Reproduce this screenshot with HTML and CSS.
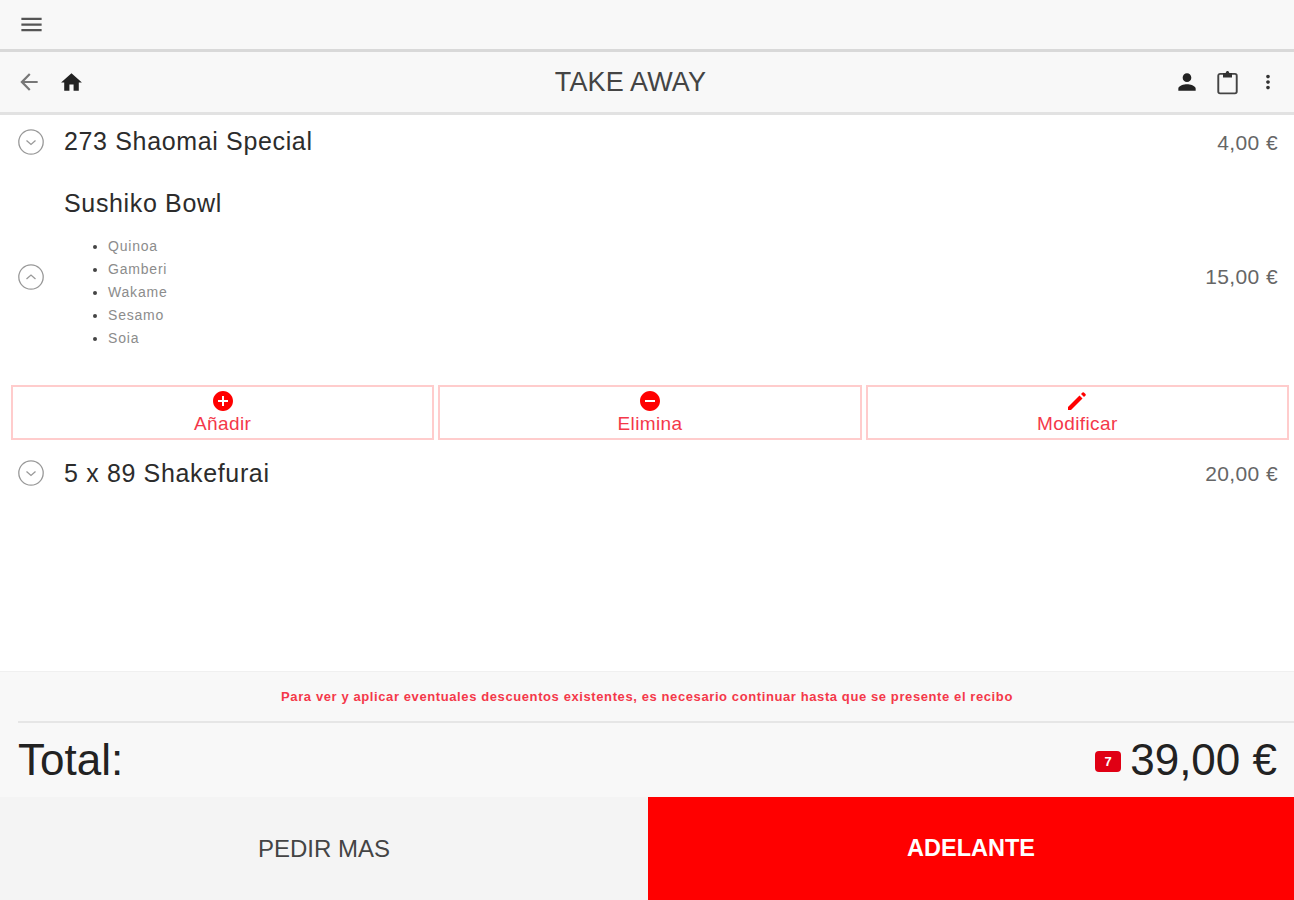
FILE: index.html
```html
<!DOCTYPE html>
<html lang="es">
<head>
    <meta charset="UTF-8">
    <meta name="viewport" content="width=device-width, initial-scale=1.0">
    <title>Take Away</title>
    <link rel="stylesheet" href="styles.css">
</head>
<body>
    <div class="app">
        <!-- Top bar -->
        <div class="top-bar">
            <svg class="menu-icon" viewBox="0 0 24 24"><path d="M3 18h18v-2H3v2zm0-5h18v-2H3v2zm0-7v2h18V6H3z"/></svg>
        </div>

        <!-- Title bar -->
        <div class="title-bar">
            <div class="title-left">
                <svg class="back-icon" viewBox="0 0 24 24"><path d="M20 11H7.830l5.590-5.590L12 4l-8 8 8 8 1.410-1.410L7.830 13H20v-2z"/></svg>
                <svg class="home-icon" viewBox="0 0 24 24"><path d="M10 20v-6h4v6h5v-8h3L12 3 2 12h3v8z"/></svg>
            </div>
            <div class="title">TAKE AWAY</div>
            <div class="title-right">
                <svg class="person-icon" viewBox="0 0 24 24"><path d="M12 12c2.210 0 4-1.790 4-4s-1.790-4-4-4-4 1.790-4 4 1.790 4 4 4zm0 2c-2.670 0-8 1.340-8 4v2h16v-2c0-2.660-5.330-4-8-4z"/></svg>
                <svg class="clip-icon" viewBox="0 0 24 24"><rect class="clip-body" x="3.800" y="4.300" width="16.400" height="17.400" rx="1.600"/><path d="M8 7.500V3.500h2.400C10.700 2.400 11.300 1.800 12 1.800s1.300.6 1.600 1.700H16v4z"/></svg>
                <svg class="more-icon" viewBox="0 0 24 24"><path d="M12 8c1.100 0 2-.9 2-2s-.9-2-2-2-2 .9-2 2 .9 2 2 2zm0 2c-1.100 0-2 .9-2 2s.9 2 2 2 2-.9 2-2-.9-2-2-2zm0 6c-1.100 0-2 .9-2 2s.9 2 2 2 2-.9 2-2-.9-2-2-2z"/></svg>
            </div>
        </div>

        <!-- Order lines -->
        <div class="order">
            <div class="line line-first">
                <svg class="toggle" viewBox="0 0 26 26"><circle cx="13" cy="13" r="12.200"/><path d="M8.500 11.500l4.500 4 4.500-4"/></svg>
                <div class="line-name">273 Shaomai Special</div>
                <div class="line-price">4,00 €</div>
            </div>

            <div class="line line-open">
                <svg class="toggle" viewBox="0 0 26 26"><circle cx="13" cy="13" r="12.200"/><path d="M8.500 15l4.500-4 4.500 4"/></svg>
                <div class="line-body">
                    <div class="line-name">Sushiko Bowl</div>
                    <ul class="extras">
                        <li>Quinoa</li>
                        <li>Gamberi</li>
                        <li>Wakame</li>
                        <li>Sesamo</li>
                        <li>Soia</li>
                    </ul>
                </div>
                <div class="line-price">15,00 €</div>
            </div>

            <div class="actions">
                <div class="action">
                    <svg viewBox="0 0 24 24"><path d="M12 2C6.480 2 2 6.480 2 12s4.480 10 10 10 10-4.480 10-10S17.520 2 12 2zm5 11h-4v4h-2v-4H7v-2h4V7h2v4h4v2z"/></svg>
                    <span>Añadir</span>
                </div>
                <div class="action">
                    <svg viewBox="0 0 24 24"><path d="M12 2C6.480 2 2 6.480 2 12s4.480 10 10 10 10-4.480 10-10S17.520 2 12 2zm5 11H7v-2h10v2z"/></svg>
                    <span>Elimina</span>
                </div>
                <div class="action">
                    <svg viewBox="0 0 24 24"><path d="M3 21v-3L14.500 6.500l3 3L6 21H3z"/><path d="M16 5l1.500-1.500a1 1 0 0 1 1.400 0l1.600 1.600a1 1 0 0 1 0 1.400L19 8z"/></svg>
                    <span>Modificar</span>
                </div>
            </div>

            <div class="line">
                <svg class="toggle" viewBox="0 0 26 26"><circle cx="13" cy="13" r="12.200"/><path d="M8.500 11.500l4.500 4 4.500-4"/></svg>
                <div class="line-name">5 x 89 Shakefurai</div>
                <div class="line-price">20,00 €</div>
            </div>
        </div>

        <!-- Discount note -->
        <div class="notice">
            <div class="notice-text">Para ver y aplicar eventuales descuentos existentes, es necesario continuar hasta que se presente el recibo</div>
        </div>

        <!-- Total -->
        <div class="total">
            <div>Total:</div>
            <div class="total-amount">
                <span class="badge">7</span>
                <span>39,00 €</span>
            </div>
        </div>

        <!-- Bottom buttons -->
        <div class="bottom">
            <div class="btn btn-more">PEDIR MAS</div>
            <div class="btn btn-next">ADELANTE</div>
        </div>
    </div>
</body>
</html>
```

FILE: styles.css
```css
/* Base styles */
body {
    font-family: 'Liberation Sans', Arial, sans-serif;
    margin: 0;
    background-color: #fff;
    color: #333;
}
.app {
    height: 900px;
    display: flex;
    flex-direction: column;
    overflow: hidden;
}

/* Top bars */
.top-bar {
    height: 49px;
    flex: none;
    display: flex;
    align-items: center;
    padding-left: 18px;
    background-color: #f8f8f8;
    border-bottom: 3px solid #d9d9d9;
}
.menu-icon {
    width: 27px;
    height: 27px;
    fill: #555;
}
.title-bar {
    height: 60px;
    flex: none;
    display: flex;
    align-items: center;
    justify-content: space-between;
    position: relative;
    background-color: #f8f8f8;
    border-bottom: 3px solid #e2e2e2;
}
.title-left {
    display: flex;
    align-items: center;
    gap: 17px;
    padding-left: 16px;
}
.back-icon {
    width: 26px;
    height: 26px;
    fill: #777;
}
.home-icon {
    width: 25px;
    height: 25px;
    fill: #222;
}
.title {
    position: absolute;
    left: 0;
    right: 33px;
    text-align: center;
    font-size: 27px;
    letter-spacing: 0.15px;
    color: #444;
}
.title-right {
    display: flex;
    align-items: center;
    padding-right: 15px;
}
.person-icon {
    width: 26px;
    height: 26px;
    fill: #222;
}
.clip-icon {
    width: 27px;
    height: 27px;
    margin-left: 14px;
    fill: #333;
}
.clip-body {
    fill: none;
    stroke: #444;
    stroke-width: 1.700;
}
.more-icon {
    width: 22px;
    height: 22px;
    margin-left: 16px;
    fill: #333;
}

/* Order */
.order {
    flex: 1;
    min-height: 0;
}
.line {
    display: flex;
    align-items: center;
    padding: 0 16px 0 18px;
    height: 50px;
}
.line-first {
    height: 53px;
    margin-bottom: 2px;
}
.line-open {
    height: 205px;
    padding-top: 8px;
    box-sizing: border-box;
}
.toggle {
    width: 26px;
    height: 26px;
    flex: none;
    margin-right: 20px;
    fill: none;
    stroke: #999;
    stroke-width: 1.300;
}
.line-body {
    align-self: flex-start;
}
.line-name {
    font-size: 25px;
    letter-spacing: 0.65px;
    color: #2c2c2c;
}
.line-open .line-name {
    margin-top: 11px;
}
.line-price {
    margin-left: auto;
    margin-top: 2px;
    font-size: 21px;
    letter-spacing: 0.4px;
    color: #666;
}
.line-open .line-price {
    margin-top: 0;
}
.extras {
    margin: 17px 0 0;
    padding-left: 44px;
    font-size: 14px;
    letter-spacing: 0.8px;
    line-height: 23px;
    color: #8c8c8c;
}
.extras li::marker {
    color: #444;
}

/* Actions under an open line */
.actions {
    display: flex;
    gap: 4px;
    padding: 10px 5px 0 11px;
    margin-bottom: 8px;
}
.action {
    flex: 1;
    height: 55px;
    box-sizing: border-box;
    padding-top: 2px;
    border: 2px solid #ffcccc;
    display: flex;
    flex-direction: column;
    align-items: center;
    font-size: 19px;
    letter-spacing: 0.4px;
    line-height: 20px;
    color: #f4384a;
}
.action svg {
    width: 24px;
    height: 24px;
    fill: #f00;
    margin-bottom: 1px;
}

/* Discount note */
.notice {
    height: 52px;
    flex: none;
    box-sizing: border-box;
    padding-left: 18px;
    background-color: #f8f8f8;
    border-top: 1px solid #f0f0f0;
}
.notice-text {
    height: 51px;
    box-sizing: border-box;
    padding-right: 18px;
    display: flex;
    align-items: center;
    justify-content: center;
    font-size: 13px;
    font-weight: bold;
    letter-spacing: 0.6px;
    color: #f4384a;
    border-bottom: 2px solid #e6e6e6;
}

/* Total */
.total {
    height: 74px;
    flex: none;
    display: flex;
    align-items: center;
    justify-content: space-between;
    padding: 0 17px 0 18px;
    background-color: #f8f8f8;
    font-size: 44px;
    color: #222;
}
.total-amount {
    display: flex;
    align-items: center;
    gap: 9px;
}
.badge {
    width: 26px;
    height: 21px;
    margin-top: 2px;
    border-radius: 4px;
    background-color: #e00014;
    color: #fff;
    font-size: 13px;
    font-weight: bold;
    line-height: 21px;
    text-align: center;
}

/* Bottom buttons */
.bottom {
    height: 103px;
    flex: none;
    display: flex;
}
.btn {
    display: flex;
    align-items: center;
    justify-content: center;
    font-size: 24px;
}
.btn-more {
    width: 648px;
    background-color: #f4f4f4;
    color: #444;
}
.btn-next {
    flex: 1;
    background-color: #f00;
    color: #fff;
    font-size: 23.500px;
    font-weight: bold;
}
```
